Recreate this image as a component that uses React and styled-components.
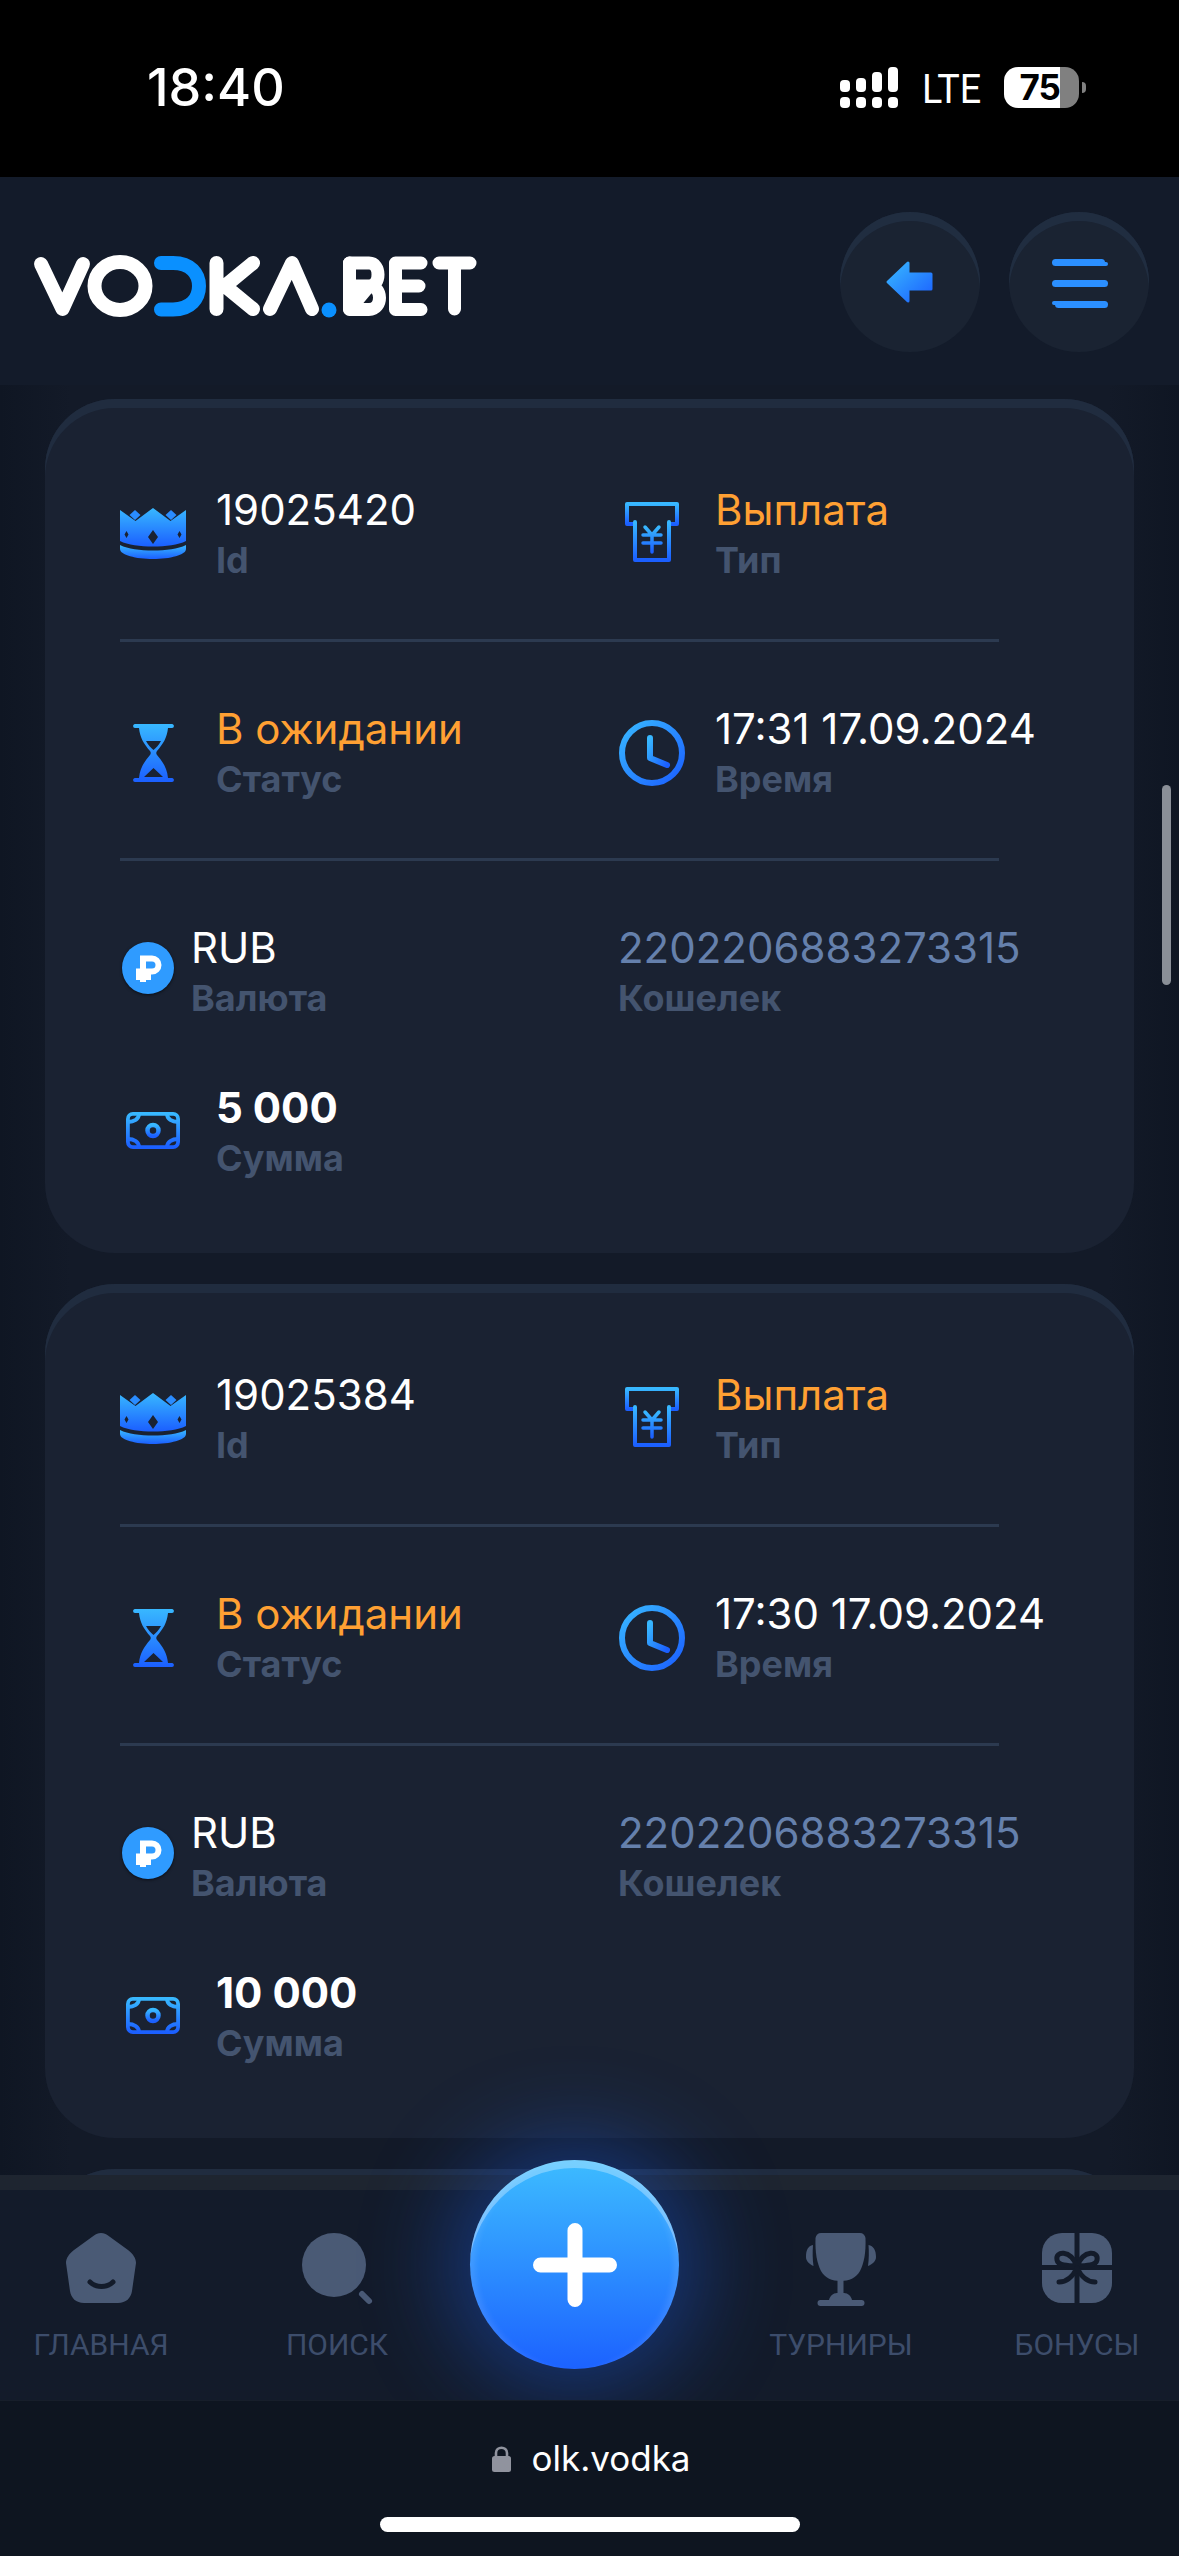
import React, { useId } from "react";
import styled, { createGlobalStyle } from "styled-components";

const Global = createGlobalStyle`
  html, body { margin: 0; padding: 0; background: #000; }
  * { box-sizing: border-box; }
  body { font-family: "Inter", "Noto Sans", sans-serif; }
`;

const Page = styled.div`
  width: 1179px;
  height: 2556px;
  display: flex;
  flex-direction: column;
  overflow: hidden;
`;

const StatusBar = styled.div`
  height: 177px;
  flex: none;
  background: #000;
  color: #fff;
  display: flex;
  justify-content: space-between;
  padding: 60px 93px 0 147px;
`;

const Clock = styled.div`
  font-size: 52px;
  font-weight: 500;
  line-height: 56px;
`;

const StatusRight = styled.div`
  display: flex;
  align-items: flex-start;
  padding-top: 7px;
`;

const Signal = styled.div`
  display: flex;
  gap: 6px;
  width: 58px;
  height: 41px;
  align-items: flex-end;
`;

const SignalBar = styled.div`
  width: 10px;
  display: flex;
  flex-direction: column;
  gap: 5px;
`;

const SignalTop = styled.span`
  display: block;
  background: #fff;
  border-radius: 4px;
  height: ${p => p.$h}px;
`;

const SignalDot = styled.span`
  display: block;
  background: #fff;
  border-radius: 4px;
  height: 11px;
`;

const Lte = styled.div`
  font-family: "Roboto", sans-serif;
  font-size: 41px;
  line-height: 40px;
  margin: 2px 0 0 24px;
  width: 82px;
  transform: scaleX(0.92);
  transform-origin: left center;
`;

const Battery = styled.div`
  width: 75px;
  height: 41px;
  border-radius: 14px;
  background: linear-gradient(90deg, #fff 0, #fff 56px, #808080 56px);
  color: #000;
  font-size: 35px;
  font-weight: 700;
  line-height: 41px;
  padding-right: 19px;
  text-align: right;
  letter-spacing: -1px;
`;

const BatteryNub = styled.div`
  width: 4px;
  height: 11px;
  margin: 15px 0 0 3px;
  background: #808080;
  border-radius: 0 4px 4px 0;
`;

const Header = styled.header`
  height: 208px;
  flex: none;
  background: #131b2a;
  display: flex;
  align-items: center;
  justify-content: space-between;
  padding: 8px 30px 0 21px;
`;

const LogoSvg = styled.svg`
  display: block;
  flex: none;
`;

const HeaderActions = styled.div`
  display: flex;
  gap: 29px;
  margin-top: -6px;
`;

const RoundButton = styled.button`
  width: 140px;
  height: 140px;
  padding: 0;
  border: 0;
  border-radius: 50%;
  background: #1a2332;
  box-shadow: inset 0 9px 0 #202d40;
  display: block;
`;

const ButtonIcon = styled.svg`
  display: block;
`;

const Main = styled.main`
  flex: 1;
  min-height: 0;
  position: relative;
  overflow: hidden;
  padding: 14px 45px 0;
  display: flex;
  flex-direction: column;
  gap: 31px;
  background: linear-gradient(90deg, #0f1623 0, #131a28 6%, #131a28 94%, #0f1623 100%);
`;

const ScrollThumb = styled.div`
  position: absolute;
  top: 400px;
  right: 8px;
  width: 9px;
  height: 200px;
  border-radius: 5px;
  background: #8a8f97;
`;

const CardBox = styled.section`
  flex: none;
  background: #1a2232;
  border-radius: 70px;
  box-shadow: inset 0 9px 0 #202c3f;
  padding: 85px 20px 70px 75px;
  min-height: 854px;
`;

const Row = styled.div`
  display: grid;
  grid-template-columns: 499px 1fr;
  margin-top: ${p => p.$top || 0}px;
`;

const Divider = styled.div`
  width: 879px;
  height: 3px;
  background: #2c3a50;
  margin: 54px 0 61px;
`;

const Cell = styled.div`
  display: flex;
  align-items: center;
  gap: ${p => (p.$compact ? 18 : 31)}px;
  padding-left: ${p => (p.$compact ? 2 : 0)}px;
`;

const IconSlot = styled.div`
  width: ${p => (p.$compact ? 52 : 66)}px;
  flex: none;
  display: flex;
  justify-content: center;
  margin-bottom: ${p => p.$lift || 0}px;
  svg { display: block; }
`;

const TextBlock = styled.div`
  white-space: nowrap;
  margin-left: -1px;
`;

const Value = styled.div`
  font-size: 42px;
  line-height: 51px;
  font-weight: ${p => (p.$strong ? 700 : 400)};
  color: ${p => p.$color || "#fff"};
`;

const Label = styled.div`
  font-size: 36px;
  line-height: 50px;
  font-weight: 700;
  color: #44546f;
`;

const RubleCoin = styled.div`
  width: 52px;
  height: 52px;
  border-radius: 50%;
  background: #2f9bff;
  box-shadow: 0 1px 3px rgba(0, 0, 0, 0.6);
`;

const Nav = styled.nav`
  position: relative;
  z-index: 2;
  flex: none;
  height: 225px;
  border-top: 15px solid #1e2530;
  background: #131b2a;
  padding-top: 43px;
  display: grid;
  grid-template-columns: 202px 270px 205px 328px 144px;
  align-items: start;
`;

const NavItem = styled.a`
  display: flex;
  flex-direction: column;
  align-items: center;
  gap: 24px;
  color: #3d4d6b;
  font-family: "Roboto", sans-serif;
  font-size: 30px;
  line-height: 36px;
  white-space: nowrap;
`;

const NavIconBox = styled.div`
  height: 70px;
  svg { display: block; overflow: visible; }
`;

const PlusButton = styled.button`
  position: absolute;
  left: 470px;
  top: -30px;
  width: 209px;
  height: 209px;
  padding: 0;
  border: 0;
  border-radius: 50%;
  background: linear-gradient(180deg, #3dbcff 0, #1c62ff 100%);
  box-shadow:
    inset 0 9px 0 -1px rgba(255, 255, 255, 0.3),
    inset 9px 0 6px -4px rgba(255, 255, 255, 0.1),
    inset -9px 0 6px -4px rgba(255, 255, 255, 0.1),
    0 0 90px 20px rgba(28, 96, 235, 0.42);
  display: flex;
  align-items: center;
  justify-content: center;
`;

const BrowserBar = styled.div`
  position: relative;
  z-index: 3;
  flex: none;
  height: 156px;
  background: #0e1520;
  border-top: 1px solid #171e2a;
  display: flex;
  flex-direction: column;
  align-items: center;
  padding-top: 35px;
`;

const UrlRow = styled.div`
  display: flex;
  align-items: center;
  gap: 20px;
  padding-left: 4px;
  color: #fff;
  font-size: 35px;
  line-height: 44px;
  svg { display: block; }
`;

const HomeIndicator = styled.div`
  width: 420px;
  height: 15px;
  margin-top: 37px;
  border-radius: 8px;
  background: #fff;
`;

const Grad = ({ id, diagonal }) => (
  <defs>
    <linearGradient id={id} x1="0" y1="0" x2={diagonal ? "1" : "0"} y2="1">
      <stop offset="0" stopColor="#38b8ff" />
      <stop offset="1" stopColor="#1b5fff" />
    </linearGradient>
  </defs>
);

const CrownIcon = () => {
  const id = useId();
  return (
    <svg width="66" height="51" viewBox="0 0 66 51">
      <Grad id={id} />
      <path fillRule="evenodd" fill={`url(#${id})`} d="M0 2 L15.5 13 L33 0 L50.5 13 L66 2 V33 C58 37 46 38.5 33 38.5 C20 38.5 8 37 0 33 Z M33 22 L28 29 L33 36 L38 29 Z M6.5 23 L4.5 26.5 L6.5 30 L8.5 26.5 Z M59.5 23 L57.5 26.5 L59.5 30 L61.5 26.5 Z" />
      <path fill={`url(#${id})`} d="M0 37 C8 41 20 42.5 33 42.5 C46 42.5 58 41 66 37 V41 C66 47 50 51 33 51 C16 51 0 47 0 41 Z" />
      <path fill="#2a8cff" d="M15 2 L20.5 7 L15 12 L9.5 7 Z M51 2 L56.5 7 L51 12 L45.5 7 Z" />
    </svg>
  );
};

const ReceiptIcon = () => {
  const id = useId();
  return (
    <svg width="54" height="60" viewBox="0 0 54 60" fill="none">
      <Grad id={id} />
      <g stroke={`url(#${id})`} strokeWidth="4" strokeLinecap="round" strokeLinejoin="round">
        <path d="M8 22 H2 V2 H52 V22 H46" />
        <path d="M10 20 V58 H44 V20" />
        <path d="M12 11 H42" />
        <path d="M20 25 L27 33 L34 25 M18 33 H36 M18 41 H36 M27 33 V50" strokeWidth="3.5" />
      </g>
    </svg>
  );
};

const HourglassIcon = () => {
  const id = useId();
  return (
    <svg width="41" height="58" viewBox="0 0 41 58">
      <Grad id={id} />
      <path fillRule="evenodd" fill={`url(#${id})`} d="M2 0 H39 C41.5 0 41.5 4 39 4 H35 C34 14 30 20 24 27 C23 28 23 30 24 31 C30 38 34 44 35 54 H39 C41.5 54 41.5 58 39 58 H2 C-0.5 58 -0.5 54 2 54 H6 C7 44 11 38 17 31 C18 30 18 28 17 27 C11 20 7 14 6 4 H2 C-0.5 4 -0.5 0 2 0 Z M13 17 C15 21 18 24 20.5 26 C23 24 26 21 28 17 Z M20.5 44 L11 53 H30 Z" />
    </svg>
  );
};

const ClockIcon = () => {
  const id = useId();
  return (
    <svg width="66" height="66" viewBox="0 0 66 66" fill="none">
      <Grad id={id} diagonal />
      <circle cx="33" cy="33" r="30" stroke={`url(#${id})`} strokeWidth="6" />
      <path d="M31 18 V38 L48 45" stroke={`url(#${id})`} strokeWidth="6" strokeLinecap="round" strokeLinejoin="round" />
    </svg>
  );
};

const RubleIcon = () => (
  <RubleCoin>
    <svg width="52" height="52" viewBox="0 0 52 52" fill="none">
      <path d="M21 40 V16.5 H30 A6.5 6.5 0 0 1 30 29.5 H14 M14 35 H29" stroke="#fff" strokeWidth="6" />
    </svg>
  </RubleCoin>
);

const MoneyIcon = () => {
  const id = useId();
  return (
    <svg width="54" height="37" viewBox="0 0 54 37" fill="none">
      <Grad id={id} />
      <g stroke={`url(#${id})`} strokeWidth="3.8" strokeLinecap="round">
        <rect x="1.9" y="1.9" width="50.2" height="33.2" rx="5" />
        <circle cx="27" cy="18.5" r="5.5" strokeWidth="4.5" />
        <path d="M13 2 C13 7 8 10 2 10 M41 2 C41 7 46 10 52 10 M13 35 C13 30 8 27 2 27 M41 35 C41 30 46 27 52 27" />
      </g>
    </svg>
  );
};

const Entry = ({ icon, value, label, color, strong, lift, compact }) => (
  <Cell $compact={compact}>
    {icon && <IconSlot $compact={compact} $lift={lift}>{icon}</IconSlot>}
    <TextBlock>
      <Value $color={color} $strong={strong}>{value}</Value>
      <Label>{label}</Label>
    </TextBlock>
  </Cell>
);

const ORANGE = "#ffa033";
const WALLET = "#6580ac";

const Card = ({ id, time, amount }) => (
  <CardBox>
    <Row>
      <Entry icon={<CrownIcon />} value={id} label="Id" lift={3} />
      <Entry icon={<ReceiptIcon />} value="Выплата" label="Тип" color={ORANGE} lift={6} />
    </Row>
    <Divider />
    <Row>
      <Entry icon={<HourglassIcon />} value="В ожидании" label="Статус" color={ORANGE} lift={2} />
      <Entry icon={<ClockIcon />} value={time} label="Время" lift={2} />
    </Row>
    <Divider />
    <Row>
      <Entry icon={<RubleIcon />} value="RUB" label="Валюта" compact lift={10} />
      <Entry value="2202206883273315" label="Кошелек" color={WALLET} />
    </Row>
    <Row $top={59}>
      <Entry icon={<MoneyIcon />} value={amount} label="Сумма" strong lift={5} />
    </Row>
  </CardBox>
);

const Logo = () => (
  <LogoSvg width="480" height="110" viewBox="0 0 480 110" fill="none" strokeLinecap="round" strokeLinejoin="round">
    <g stroke="#fff" strokeWidth="14">
      <path d="M20 34 L41.5 79 L62 34" />
      <ellipse cx="99" cy="56" rx="25.5" ry="24" />
      <path d="M195.5 33 V79 M232 33 L204 56 L232 79" />
      <path d="M249 79 L271 33 L291 79" />
    </g>
    <g stroke="#fff" strokeWidth="13">
      <path d="M328.5 33 H348 C360 33 360 56 348 56 H328.5 M348 56 C362 56 362 79.5 348 79.5 H328.5 Z" />
      <path d="M328.5 33 V79" />
      <path d="M400 33 H374.5 V79.5 H400 M374.5 56 H398" />
      <path d="M418 33 H449 M433.5 33 V79" />
    </g>
    <path d="M140 33 H152 C170 33 178 44 178 56 C178 68 170 79.5 152 79.5 H140" stroke="#0a90ff" strokeWidth="14" />
    <circle cx="308" cy="80" r="7.5" fill="#0a90ff" />
  </LogoSvg>
);

const BackIcon = () => {
  const id = useId();
  return (
    <ButtonIcon width="140" height="140" viewBox="0 0 140 140">
      <Grad id={id} diagonal />
      <path d="M48 70 L68 51 V62 H91 V77 H68 V89 Z" fill={`url(#${id})`} stroke={`url(#${id})`} strokeWidth="3" strokeLinejoin="round" />
    </ButtonIcon>
  );
};

const MenuIcon = () => (
  <ButtonIcon width="140" height="140" viewBox="0 0 140 140" fill="#2b8fff">
    <rect x="43" y="47" width="53" height="7" rx="3.5" />
    <rect x="88" y="50" width="11" height="4" rx="2" />
    <rect x="43" y="68" width="56" height="7" rx="3.5" />
    <rect x="46" y="89" width="53" height="7" rx="3.5" />
    <rect x="43" y="89" width="11" height="4" rx="2" />
  </ButtonIcon>
);

const NAV_FILL = "#4a5a75";
const NAV_DARK = "#131b2a";

const HomeIcon = () => (
  <svg width="70" height="70" viewBox="0 0 70 70">
    <path fill={NAV_FILL} d="M35 0 C38 0 40 1 42 2.5 L62 17 C67 21 70 25 70 30 L66 58 C65 65 60 70 52 70 H18 C10 70 5 65 4 58 L0 30 C0 25 3 21 8 17 L28 2.5 C30 1 32 0 35 0 Z" />
    <path d="M24 49 C30 55 41 55 47 49" stroke={NAV_DARK} strokeWidth="5" strokeLinecap="round" fill="none" />
  </svg>
);

const SearchIcon = () => (
  <svg width="70" height="70" viewBox="0 0 70 70">
    <circle cx="32" cy="32" r="32" fill={NAV_FILL} />
    <path d="M60 61 L67 68" stroke={NAV_FILL} strokeWidth="6" strokeLinecap="round" />
  </svg>
);

const TrophyIcon = () => (
  <svg width="70" height="73" viewBox="0 0 70 73" fill={NAV_FILL}>
    <path d="M15 0 H54 C57 0 59 2 59.5 5 C60 20 58 30 54 38 C50 45 43 48 34.5 48 C26 48 19 45 15 38 C11 30 9 20 9.5 5 C10 2 12 0 15 0 Z" />
    <path d="M7 12 C2 13 0 17 0 24 C0 28 3 31 7.5 33 C6.5 26 6.5 19 7 12 Z" />
    <path d="M62.5 12 C67.5 13 70 17 70 24 C70 28 67 31 62 33 C63 26 63 19 62.5 12 Z" />
    <rect x="31.5" y="46" width="6" height="18" />
    <path d="M23 67 C24 63 27 60 31 60 H38 C42 60 45 63 46 67 Z" />
    <rect x="11.5" y="67" width="47" height="6" rx="3" />
  </svg>
);

const GiftIcon = () => (
  <svg width="70" height="70" viewBox="0 0 70 70">
    <rect width="70" height="70" rx="20" fill={NAV_FILL} />
    <g stroke={NAV_DARK} fill="none">
      <path d="M35 0 V70 M0 34.5 H70" strokeWidth="5" />
      <path d="M35 33 C28 16 13 18 15 27 C16 33 26 33 35 33 Z M35 33 C42 16 57 18 55 27 C54 33 44 33 35 33 Z" strokeWidth="5" />
      <path d="M35 35 C30 45 24 49 17 49 M35 35 C40 45 46 49 53 49" strokeWidth="5" strokeLinecap="round" />
    </g>
  </svg>
);

const PlusIcon = () => (
  <svg width="84" height="84" viewBox="0 0 84 84">
    <path d="M42 7.5 V76.5 M7.5 42 H76.5" stroke="#fff" strokeWidth="15" strokeLinecap="round" />
  </svg>
);

const LockIcon = () => (
  <svg width="19" height="27" viewBox="0 0 19 27" fill="none">
    <path d="M4 12 V8 C4 1 15 1 15 8 V12" stroke="#90939e" strokeWidth="2.6" />
    <rect y="11" width="19" height="16" rx="2.5" fill="#90939e" />
  </svg>
);

export default function App() {
  return (
    <Page>
      <Global />
      <StatusBar>
        <Clock>18:40</Clock>
        <StatusRight>
          <Signal>
            {[12, 14, 20, 25].map(h => (
              <SignalBar key={h}>
                <SignalTop $h={h} />
                <SignalDot />
              </SignalBar>
            ))}
          </Signal>
          <Lte>LTE</Lte>
          <Battery>75</Battery>
          <BatteryNub />
        </StatusRight>
      </StatusBar>
      <Header>
        <Logo />
        <HeaderActions>
          <RoundButton aria-label="Назад"><BackIcon /></RoundButton>
          <RoundButton aria-label="Меню"><MenuIcon /></RoundButton>
        </HeaderActions>
      </Header>
      <Main>
        <Card id="19025420" time="17:31 17.09.2024" amount="5 000" />
        <Card id="19025384" time="17:30 17.09.2024" amount="10 000" />
        <CardBox />
        <ScrollThumb />
      </Main>
      <Nav>
        <NavItem><NavIconBox><HomeIcon /></NavIconBox>ГЛАВНАЯ</NavItem>
        <NavItem><NavIconBox><SearchIcon /></NavIconBox>ПОИСК</NavItem>
        <span />
        <NavItem><NavIconBox><TrophyIcon /></NavIconBox>ТУРНИРЫ</NavItem>
        <NavItem><NavIconBox><GiftIcon /></NavIconBox>БОНУСЫ</NavItem>
        <PlusButton aria-label="Добавить"><PlusIcon /></PlusButton>
      </Nav>
      <BrowserBar>
        <UrlRow><LockIcon />olk.vodka</UrlRow>
        <HomeIndicator />
      </BrowserBar>
    </Page>
  );
}
